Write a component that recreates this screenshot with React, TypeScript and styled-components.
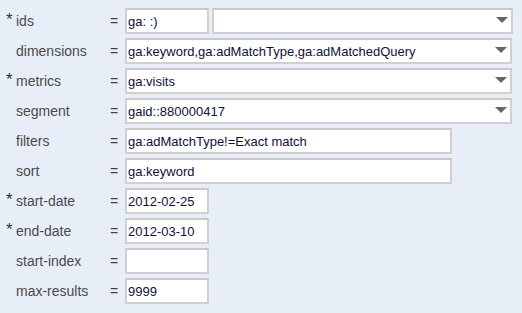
import * as React from "react";
import styled, { createGlobalStyle } from "styled-components";

const GlobalStyle = createGlobalStyle`
  html, body {
    margin: 0;
    padding: 0;
    background: #e8eef8;
    font-family: "Liberation Sans", Arial, sans-serif;
  }
`;

const Form = styled.div`
  display: grid;
  grid-template-columns: 16px 94px 15px 1fr;
  row-gap: 4px;
  padding: 8px 10px 0 0;
  width: 522px;
  box-sizing: border-box;
  align-items: center;
`;

const Star = styled.span`
  font-size: 17px;
  color: #333;
  padding-left: 6px;
  align-self: start;
  line-height: 24px;
`;

const Label = styled.span`
  font-size: 14px;
  color: #4a4a4a;
`;

const Equals = styled.span`
  font-size: 14px;
  color: #444;
`;

const Field = styled.div`
  display: flex;
  gap: 3px;
`;

const Box = styled.div<{ $w: number }>`
  width: ${(p) => p.$w}px;
  height: 26px;
  box-sizing: border-box;
  border: 2px solid #d0d0d0;
  border-top-color: #c8c8c8;
  background: #fff;
  display: flex;
  align-items: center;
  padding-left: 1px;
  font-size: 13px;
  color: #10103a;
  position: relative;
`;

const Arrow = styled.span`
  position: absolute;
  right: 3px;
  top: 7px;
  width: 0;
  height: 0;
  border-left: 6px solid transparent;
  border-right: 6px solid transparent;
  border-top: 6px solid #666;
`;

type Row = {
  name: string;
  required?: boolean;
  boxes: { w: number; value: string; select?: boolean }[];
};

const rows: Row[] = [
  {
    name: "ids",
    required: true,
    boxes: [
      { w: 84, value: "ga: :)" },
      { w: 301, value: "", select: true },
    ],
  },
  {
    name: "dimensions",
    boxes: [{ w: 387, value: "ga:keyword,ga:adMatchType,ga:adMatchedQuery", select: true }],
  },
  { name: "metrics", required: true, boxes: [{ w: 387, value: "ga:visits", select: true }] },
  { name: "segment", boxes: [{ w: 387, value: "gaid::880000417", select: true }] },
  { name: "filters", boxes: [{ w: 327, value: "ga:adMatchType!=Exact match" }] },
  { name: "sort", boxes: [{ w: 327, value: "ga:keyword" }] },
  { name: "start-date", required: true, boxes: [{ w: 84, value: "2012-02-25" }] },
  { name: "end-date", required: true, boxes: [{ w: 84, value: "2012-03-10" }] },
  { name: "start-index", boxes: [{ w: 84, value: "" }] },
  { name: "max-results", boxes: [{ w: 84, value: "9999" }] },
];

export default function App() {
  return (
    <>
      <GlobalStyle />
      <Form>
        {rows.map((r) => (
          <React.Fragment key={r.name}>
            <Star>{r.required ? "*" : ""}</Star>
            <Label>{r.name}</Label>
            <Equals>=</Equals>
            <Field>
              {r.boxes.map((b, i) => (
                <Box key={i} $w={b.w}>
                  {b.value}
                  {b.select && <Arrow />}
                </Box>
              ))}
            </Field>
          </React.Fragment>
        ))}
      </Form>
    </>
  );
}
